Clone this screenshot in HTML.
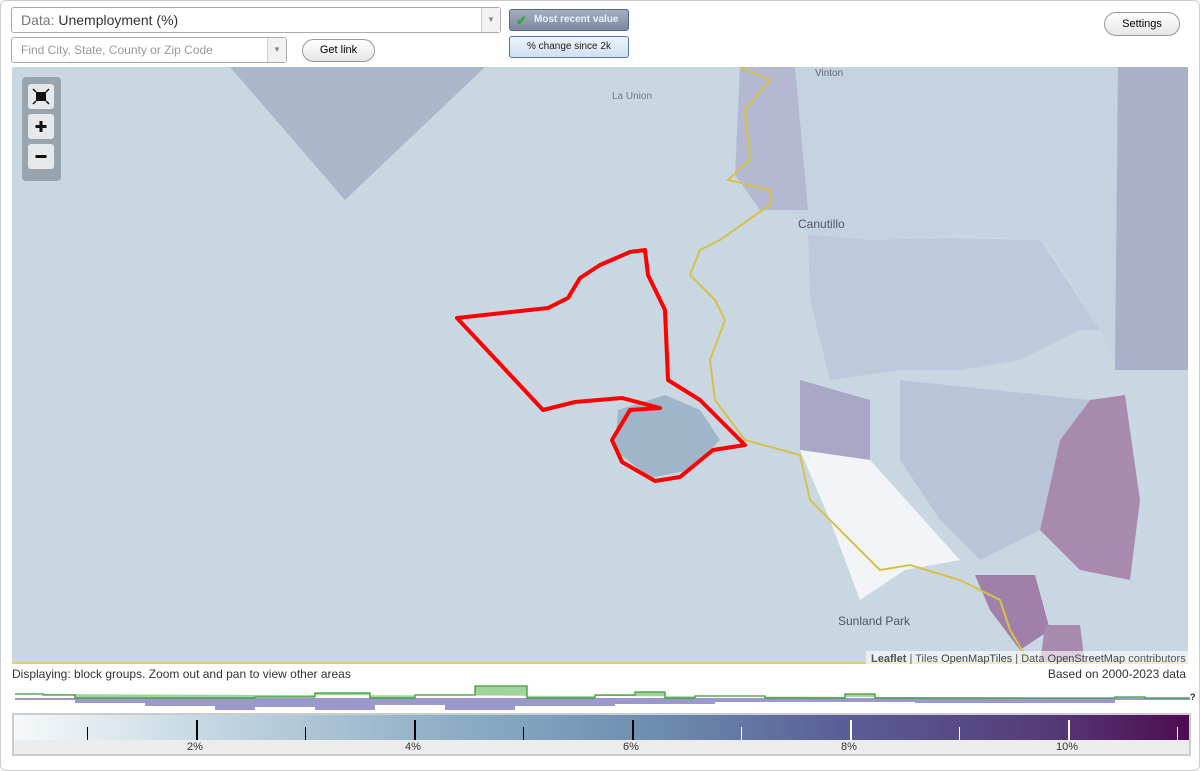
<!DOCTYPE html>
<html><head><style>
body{margin:0;width:1200px;height:771px;background:#fff;font-family:"Liberation Sans",sans-serif;overflow:hidden;position:relative}
.frame{position:absolute;left:0;top:0;width:1198px;height:769px;border:1px solid #ccc;border-radius:6px}
.sel{position:absolute;border:1px solid #aaa;border-radius:3px;background:#fff;box-sizing:border-box}
.arr{position:absolute;right:0;top:0;bottom:0;width:18px;border-left:1px solid #ccc;background:#f2f2f2;color:#888;font-size:8px;text-align:center}
.btn{position:absolute;border:1px solid #999;border-radius:12px;background:linear-gradient(#fff,#e6e6e6);font-size:11px;text-align:center;box-sizing:border-box}
</style></head><body>
<div class="frame"></div>
<div class="sel" style="left:11px;top:7px;width:490px;height:26px;font-size:14px;line-height:24px;padding-left:9px"><span style="color:#777">Data:</span> <span style="color:#333">Unemployment (%)</span><div class="arr" style="line-height:24px">▼</div></div>
<div class="sel" style="left:11px;top:37px;width:276px;height:26px;font-size:12px;line-height:24px;padding-left:9px;color:#999">Find City, State, County or Zip Code<div class="arr" style="line-height:24px">▼</div></div>
<div class="btn" style="left:302px;top:39px;width:73px;height:23px;line-height:21px">Get link</div>
<div style="position:absolute;left:509px;top:9px;width:120px;height:22px;border:1px solid #4a6a9a;border-radius:3px;background:linear-gradient(#a6aec0,#7c87a0);box-sizing:border-box;color:#eef;font-size:10px;font-weight:bold;line-height:20px;padding-left:24px"><span style="position:absolute;left:6px;top:1px;color:#3a3;font-size:13px">✔</span>Most recent value</div>
<div style="position:absolute;left:509px;top:36px;width:120px;height:22px;border:1px solid #4a7ab0;border-radius:3px;background:linear-gradient(#eef4fb,#cfe0f0);box-sizing:border-box;color:#222;font-size:10px;line-height:20px;text-align:center">% change since 2k</div>
<div class="btn" style="left:1104px;top:12px;width:76px;height:24px;line-height:22px">Settings</div>

<svg style="position:absolute;left:12px;top:67px" width="1176" height="597" viewBox="12 67 1176 597">
<rect x="12" y="67" width="1176" height="597" fill="#c9d7e3"/>
<polygon points="230,67 485,67 345,200" fill="#aab6c9"/>
<polygon points="740,67 1118,67 1118,370 1100,330 1045,240 950,235 870,245 808,235 790,210 740,170" fill="#c4d3df"/>
<polygon points="808,235 870,240 950,238 1040,240 1100,330 1080,330 1020,360 960,370 900,370 830,380 810,300" fill="#bccadb"/>
<polygon points="740,67 795,67 808,210 760,210 735,175" fill="#b4b8d0"/>
<polygon points="1118,67 1188,67 1188,370 1115,370" fill="#a9b0ca"/>
<polygon points="800,380 870,400 870,460 800,450" fill="#aaa6c6"/>
<polygon points="800,450 870,460 960,560 905,570 860,600 830,520" fill="#f2f4f8"/>
<polygon points="1090,400 1125,395 1140,500 1130,580 1080,570 1040,530 1060,440" fill="#a88aae"/>
<polygon points="975,575 1035,575 1050,630 1020,650 990,610" fill="#a07fa8"/>
<polygon points="1045,625 1080,625 1085,664 1040,664" fill="#a88aae"/>
<polygon points="900,380 1090,400 1060,440 1040,530 980,560 940,520 900,460" fill="#bac4d8"/>
<polygon points="618,410 665,395 700,410 720,440 690,470 650,478 615,450" fill="#9fb6ca"/>
<polyline points="740,67 770,80 745,110 750,160 728,180 770,190 770,205 720,240 700,250 690,275 715,300 725,320 710,360 715,400 745,440 800,455 810,500 860,550 880,570 910,565 960,580 1000,600 1010,630 1030,664" fill="none" stroke="#d4c24a" stroke-width="2"/>
<polygon points="457,318 548,308 568,298 580,278 600,265 630,252 645,250 648,275 665,310 668,380 700,400 745,445 713,450 680,477 655,481 622,462 612,440 630,410 660,408 622,398 575,402 543,410 515,380" fill="none" stroke="#f00" stroke-width="4" stroke-linejoin="round"/>
<line x1="12" y1="663" x2="1188" y2="663" stroke="#e6d05a" stroke-width="2"/>
<text x="815" y="76" font-size="10" fill="#667">Vinton</text>
<text x="612" y="99" font-size="10" fill="#778">La Union</text>
<text x="798" y="228" font-size="12" fill="#556">Canutillo</text>
<text x="838" y="625" font-size="12" fill="#556">Sunland Park</text>
<rect x="22" y="77" width="39" height="104" rx="4" fill="#98a4ae"/>
<rect x="28" y="84" width="26" height="25" rx="3" fill="#e6e8ea"/>
<rect x="28" y="114" width="26" height="25" rx="3" fill="#e6e8ea"/>
<rect x="28" y="144" width="26" height="25" rx="3" fill="#e6e8ea"/>
<rect x="36" y="92" width="10" height="9" fill="#111"/>
<path d="M33 89l3 3M49 89l-3 3M33 104l3-3M49 104l-3-3" stroke="#111" stroke-width="1.5"/>
<path d="M41 121v11M35.5 126.5h11" stroke="#111" stroke-width="3"/>
<path d="M35.5 156.5h11" stroke="#111" stroke-width="3"/>
<rect x="866" y="651" width="322" height="14" fill="rgba(255,255,255,0.6)"/>
<text x="871" y="662" font-size="11" fill="#555"><tspan font-weight="bold">Leaflet</tspan> | Tiles <tspan fill="#444">OpenMapTiles</tspan> | Data <tspan fill="#444">OpenStreetMap</tspan> contributors</text>
</svg>
<div style="position:absolute;left:12px;top:667px;font-size:12px;color:#333">Displaying: block groups. Zoom out and pan to view other areas</div>
<div style="position:absolute;right:14px;top:667px;font-size:12px;color:#333">Based on 2000-2023 data</div>
<svg style="position:absolute;left:15px;top:683px" width="1180" height="30">
<path d="M0 15H1175V17H1100V20H900V19H700V21H600V23H500V27H430V22H360V27H300V24H240V27H200V23H130V20H60V17H0Z" fill="#9b98cc"/>
<path d="M0 11H28V12H60V15H140V15H240V14H300V10H355V15H400V12H460V3H512V15H580V12H620V9H650V15H680V13H750V15H830V11H860V15H1100V14H1130V15H1175" fill="#9fd49a" stroke="#3a9a3a" stroke-width="1.3"/>
<text x="1175" y="17" font-size="9" font-weight="bold" fill="#222">?</text>
</svg>
<div style="position:absolute;left:12px;top:713px;width:1179px;height:43px;border:2px solid #ccc;box-sizing:border-box;background:#ececec">
<div style="height:25px;background:linear-gradient(90deg,#f6f9fb 0%,#c0d4e0 18%,#93b2c8 35%,#6c8cb0 55%,#5a5f98 70%,#553a78 88%,#4e0b52 100%);position:relative">
<div style="position:absolute;left:73px;top:12px;width:1px;height:13px;background:#000"></div>
<div style="position:absolute;left:182px;top:5px;width:2px;height:20px;background:#000"></div>
<div style="position:absolute;left:291px;top:12px;width:1px;height:13px;background:#000"></div>
<div style="position:absolute;left:400px;top:5px;width:2px;height:20px;background:#000"></div>
<div style="position:absolute;left:509px;top:12px;width:1px;height:13px;background:#000"></div>
<div style="position:absolute;left:618px;top:5px;width:2px;height:20px;background:#000"></div>
<div style="position:absolute;left:727px;top:12px;width:1px;height:13px;background:#fff"></div>
<div style="position:absolute;left:836px;top:5px;width:2px;height:20px;background:#fff"></div>
<div style="position:absolute;left:945px;top:12px;width:1px;height:13px;background:#fff"></div>
<div style="position:absolute;left:1054px;top:5px;width:2px;height:20px;background:#fff"></div>
<div style="position:absolute;left:1163px;top:12px;width:1px;height:13px;background:#fff"></div>
</div>
<div style="position:relative;font-size:11px;color:#333">
<span style="position:absolute;left:173px;top:1px">2%</span><span style="position:absolute;left:391px;top:1px">4%</span><span style="position:absolute;left:609px;top:1px">6%</span><span style="position:absolute;left:827px;top:1px">8%</span><span style="position:absolute;left:1042px;top:1px">10%</span>
</div></div>
</body></html>
